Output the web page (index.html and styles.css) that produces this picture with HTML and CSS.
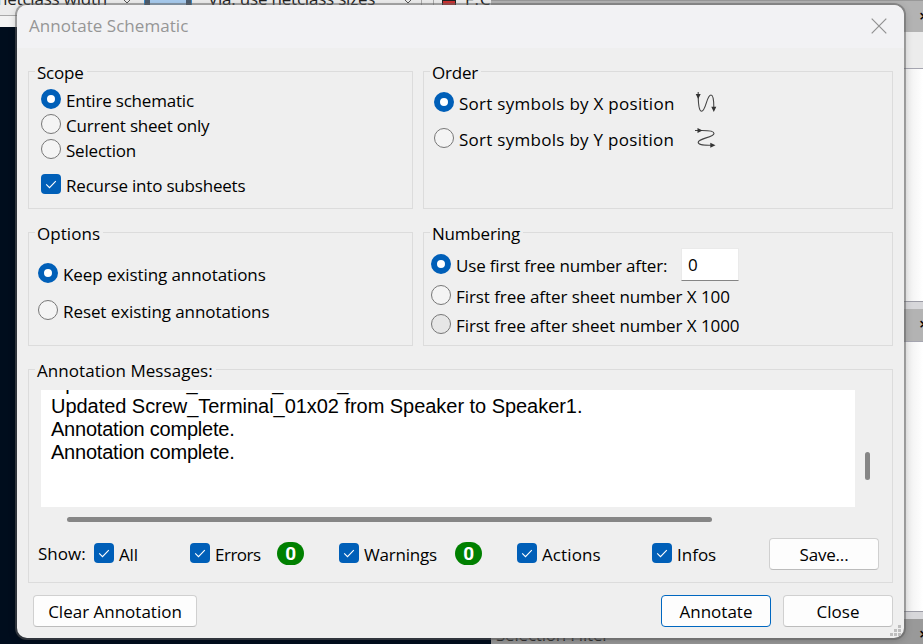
FILE: index.html
```html
<!DOCTYPE html>
<html lang="en">
<head>
<meta charset="utf-8">
<title>Annotate Schematic</title>
<link rel="stylesheet" href="styles.css">
</head>
<body>
<div class="editor">
  <div class="toolbar">
    <span class="combo combo-track">netclass width</span>
    <svg class="chev" viewBox="0 0 10 6"><path d="M1 0l4 4 4-4"/></svg>
    <span class="toggle"></span>
    <span class="combo combo-via">Via: use netclass sizes</span>
    <svg class="chev" viewBox="0 0 10 6"><path d="M1 0l4 4 4-4"/></svg>
    <span class="grip"></span>
    <span class="swatch"></span>
    <span class="combo combo-layer">F.Cu</span>
  </div>
  <div class="work">
    <div class="left"><div class="ruler"></div><div class="canvas"></div></div>
  </div>
</div>
<div class="panels">
  <div class="bar bar-first">×</div><div class="tools"></div><div class="list list-a"></div>
  <div class="gap"></div><div class="bar bar-second">×</div><div class="list list-b"></div>
  <div class="gap"></div><div class="bar bar-third">×</div>
</div>
<div class="filter">Selection Filter</div>

<div class="dialog">
  <header class="titlebar">
    <span class="title">Annotate Schematic</span>
    <svg class="close" viewBox="0 0 16 16"><path d="M.7.7l14.6 14.6M15.3.7L.7 15.3"/></svg>
  </header>
  <main class="groups">
    <section class="group scope">
      <h2>Scope</h2>
      <label class="row"><i class="radio on"></i><span>Entire schematic</span></label>
      <label class="row"><i class="radio"></i><span>Current sheet only</span></label>
      <label class="row"><i class="radio"></i><span>Selection</span></label>
      <label class="row recurse"><i class="check"><svg viewBox="0 0 20 20"><path d="M5.2 10.4l3.3 3.3 6.3-6.5"/></svg></i><span>Recurse into subsheets</span></label>
    </section>
    <section class="group order">
      <h2>Order</h2>
      <label class="row"><i class="radio on"></i><span>Sort symbols by X position</span>
        <svg class="sort" viewBox="0 0 24 24"><path class="line" d="M3.2 1v5C3.4 14 4.5 20.2 6.5 20.2C11 20.2 11.5 4 16 4C18.5 4 18.8 10 18.8 16"/><path class="head" d="M.7 3h5l-2.5 5zM16.3 15.8h5l-2.5 5.2z"/></svg></label>
      <label class="row"><i class="radio"></i><span>Sort symbols by Y position</span>
        <svg class="sort" viewBox="0 0 24 24"><path class="line" d="M0 3.5h7C14 3.5 19 4 19 6.4C19 10.2 3.2 11.5 3.2 15.2C3.2 18.2 9 18 16 18.3"/><path class="head" d="M2.5 1v5l5-2.5zM15.3 15.8v5l5.2-2.5z"/></svg></label>
    </section>
    <section class="group options">
      <h2>Options</h2>
      <label class="row"><i class="radio on"></i><span>Keep existing annotations</span></label>
      <label class="row"><i class="radio"></i><span>Reset existing annotations</span></label>
    </section>
    <section class="group numbering">
      <h2>Numbering</h2>
      <div class="row first"><i class="radio on"></i><span>Use first free number after:</span><b class="field">0</b></div>
      <label class="row second"><i class="radio"></i><span>First free after sheet number X 100</span></label>
      <label class="row third"><i class="radio hover"></i><span>First free after sheet number X 1000</span></label>
    </section>
    <section class="group messages">
      <h2>Annotation Messages:</h2>
      <div class="log-area">
        <div class="log">
          <p>Updated Screw_Terminal_01x02_</p>
          <p>Updated Screw_Terminal_01x02 from Speaker to Speaker1.</p>
          <p class="done">Annotation complete.</p>
          <p class="done">Annotation complete.</p>
        </div>
        <div class="vthumb"></div>
      </div>
      <div class="hthumb"></div>
      <div class="show">
        <span class="show-label">Show:</span>
        <label class="row w-all"><i class="check"><svg viewBox="0 0 20 20"><path d="M5.2 10.4l3.3 3.3 6.3-6.5"/></svg></i><span>All</span></label>
        <label class="row w-errors"><i class="check"><svg viewBox="0 0 20 20"><path d="M5.2 10.4l3.3 3.3 6.3-6.5"/></svg></i><span>Errors</span></label>
        <b class="badge">0</b>
        <label class="row w-warnings"><i class="check"><svg viewBox="0 0 20 20"><path d="M5.2 10.4l3.3 3.3 6.3-6.5"/></svg></i><span>Warnings</span></label>
        <b class="badge">0</b>
        <label class="row w-actions"><i class="check"><svg viewBox="0 0 20 20"><path d="M5.2 10.4l3.3 3.3 6.3-6.5"/></svg></i><span>Actions</span></label>
        <label class="row w-infos"><i class="check"><svg viewBox="0 0 20 20"><path d="M5.2 10.4l3.3 3.3 6.3-6.5"/></svg></i><span>Infos</span></label>
        <button class="btn">Save...</button>
      </div>
    </section>
  </main>
  <footer class="actions">
    <button class="btn clear">Clear Annotation</button>
    <button class="btn primary">Annotate</button>
    <button class="btn">Close</button>
  </footer>
  <svg class="resize" viewBox="0 0 12 12"><path d="M8 0h3v3H8zM4 4h3v3H4zM8 4h3v3H8zM0 8h3v3H0zM4 8h3v3H4zM8 8h3v3H8z"/></svg>
</div>
</body>
</html>
```
FILE: styles.css
```css
* { box-sizing: border-box; }
body {
  margin: 0;
  width: 923px;
  height: 644px;
  overflow: hidden;
  position: relative;
  font: 17px/24px "Open Sans", "Noto Sans", sans-serif;
  letter-spacing: -0.2px;
  color: #000;
  background: #000d1d;
}
h2, p { margin: 0; font: inherit; }

/* editor window behind the dialog */
.toolbar {
  display: flex;
  height: 16px;
  overflow: hidden;
  background: #ececec;
  border-bottom: 1px solid #a9a9a9;
}
.combo { flex: none; margin-top: -13px; white-space: nowrap; color: #222; }
.combo-track { width: 121px; margin-left: -3px; }
.combo-via { width: 208px; padding-left: 17px; }
.combo-layer { width: 36px; padding-left: 9px; letter-spacing: .8px; }
.chev { flex: none; width: 10px; height: 6px; margin: -1px 8px 0 4px; fill: none; stroke: #555; }
.combo-track + .chev { margin-right: 13px; }
.toggle { flex: none; width: 46px; background: #a7cbee; border: solid #4d5c6c; border-width: 0 5px; outline: 1px solid #3a8ccb; }
.grip { flex: none; width: 13px; height: 16px; border: solid #aaa; border-width: 0 1px; }
.swatch { flex: none; width: 14px; height: 16px; margin-left: 8px; background: #c33; border: 1px solid #222; }
.ruler { width: 17px; height: 11px; background: #f3f3f3; }
.canvas { width: 17px; height: 617px; background: #000d1d; }
.panels {
  position: absolute;
  left: 491px;
  top: 0;
  width: 432px;
  height: 644px;
  background: #fff;
}
.bar {
  height: 32px;
  overflow: hidden;
  text-indent: 428px;
  white-space: nowrap;
  font-weight: 600;
  background: #b3b3b3;
}
.bar-first { border-top: 1px solid #999; line-height: 29px; }
.bar-second { line-height: 30px; }
.bar-third { height: 25px; line-height: 29px; background: #999; }
.tools { height: 36px; background: #ececec; }
.list { border-top: 1px solid #a5a5b0; border-bottom: 1px solid #9c9ca6; background: linear-gradient(90deg, #eee 414px, #fff 432px); }
.list-a { height: 234px; }
.list-b { height: 271px; }
.gap { height: 7px; background: #d7d7da; }
.filter {
  position: absolute;
  left: 496px;
  top: 623px;
  color: #333;
}

/* dialog window */
.dialog {
  position: absolute;
  left: 17px;
  top: 5px;
  width: 887px;
  height: 633px;
  border-radius: 10px;
  background: #efefef;
  box-shadow: 0 0 0 2px rgba(95, 95, 95, .5), 0 2px 8px rgba(0, 0, 0, .25);
}
.titlebar {
  display: flex;
  justify-content: space-between;
  height: 43px;
  padding: 9px 17px 0 12px;
  border-radius: 10px 10px 0 0;
  background: #f2f2f4;
  color: #969696;
}
.title { letter-spacing: .05px; }
.close { width: 16px; height: 16px; margin-top: 4px; fill: none; stroke: #919191; stroke-width: 1.2; }
.groups {
  display: grid;
  grid-template-columns: 385px 470px;
  grid-template-rows: 138px 114px 214px;
  column-gap: 10px;
  row-gap: 23px;
  padding: 23px 11px 0;
}
.group { border: 1px solid #dcdcdc; min-width: 0; }
h2 { width: max-content; height: 24px; line-height: 26px; margin: -12px 0 0 6px; padding: 0 3px 0 2px; background: #efefef; }
.row { display: flex; align-items: center; height: 25px; white-space: nowrap; }
.row > span { padding: 3px 0 0 5px; }
.radio, .check { flex: none; width: 20px; height: 20px; }
.radio { border: 1px solid #777; border-radius: 50%; background: #f4f4f4; }
.radio.on { border: 6px solid #005fb8; background: #fff; }
.radio.hover { background: #e6e6e6; }
.check { border-radius: 4px; background: #005fb8; }
.check svg { display: block; fill: none; stroke: #fff; stroke-width: 1.1; }

.scope .row { margin-left: 12px; }
.scope h2 + .row { margin-top: 2.5px; }
.scope .recurse { margin-top: 10px; }
.order .row { margin-left: 10px; height: 36px; letter-spacing: .28px; }
.sort { width: 24px; height: 24px; margin: 2px 173px 0 auto; }
.sort .line { fill: none; stroke: #444; stroke-width: 1.1; }
.sort .head { fill: #333; }
.options .row { height: 37px; margin-left: 9px; letter-spacing: -.08px; }
.options h2, .messages h2 { letter-spacing: .06px; }
.options h2 + .row { margin-top: 9.5px; }
.numbering .row { height: 30px; margin-left: 7px; letter-spacing: -.07px; }
.numbering .first { height: 32px; margin-top: 3px; letter-spacing: -.18px; }
.numbering .third { height: 29px; margin-top: -.5px; }
.field {
  width: 58px;
  height: 33px;
  margin: 1px 153px 0 auto;
  padding: 4px 6px;
  font-weight: 400;
  background: #fff;
  border: 1px solid #eaeaea;
  border-bottom-color: #858585;
}

.messages { grid-column: 1 / 3; }
.log-area { display: flex; height: 117px; margin: 8px 0 0 12px; }
.log {
  width: 814px;
  padding: 0 10px;
  overflow: hidden;
  background: #fff;
  font: 20px/23px "Liberation Sans", Arial, sans-serif;
  letter-spacing: -.04px;
}
.log p:first-child { margin-top: -18px; letter-spacing: -.1px; }
.log .done { letter-spacing: -.22px; }
.vthumb { width: 5px; height: 28px; margin: 62px 0 0 10px; border-radius: 3px; background: #868686; }
.hthumb { width: 645px; height: 5px; margin: 10px 0 0 38px; border-radius: 3px; background: #868686; }
.show { display: flex; align-items: center; height: 32px; margin: 16px 13px 0 9px; }
.show-label { width: 56px; letter-spacing: 0; }
.show .row { height: 26px; margin-top: -2px; }
.w-all { width: 96px; }
.w-errors { width: 87px; letter-spacing: -.5px; }
.w-warnings { width: 116px; margin-left: 35px; }
.w-actions { width: 135px; margin-left: 35px; letter-spacing: .1px; }
.w-infos { flex: 1; letter-spacing: 0; }
.badge {
  width: 27px;
  height: 23px;
  margin-top: -1px;
  border-radius: 12px;
  background: #008000;
  color: #fff;
  font: 700 19px/24px Roboto, sans-serif;
  text-align: center;
}
.btn {
  width: 110px;
  height: 32px;
  padding: 1px 0 0;
  border: 1px solid #d0d0d0;
  border-bottom-color: #bcbcbc;
  border-radius: 4px;
  background: #fdfdfd;
  color: #000;
  font: inherit;
  letter-spacing: inherit;
}
.actions { display: flex; gap: 12px; padding: 12px 11px 0 16px; letter-spacing: 0; }
.clear { width: 164px; margin-right: auto; }
.primary { border-color: #0067c0; }
.resize { position: absolute; right: 2px; bottom: 1px; width: 12px; height: 12px; fill: #bdbdbd; }
```
